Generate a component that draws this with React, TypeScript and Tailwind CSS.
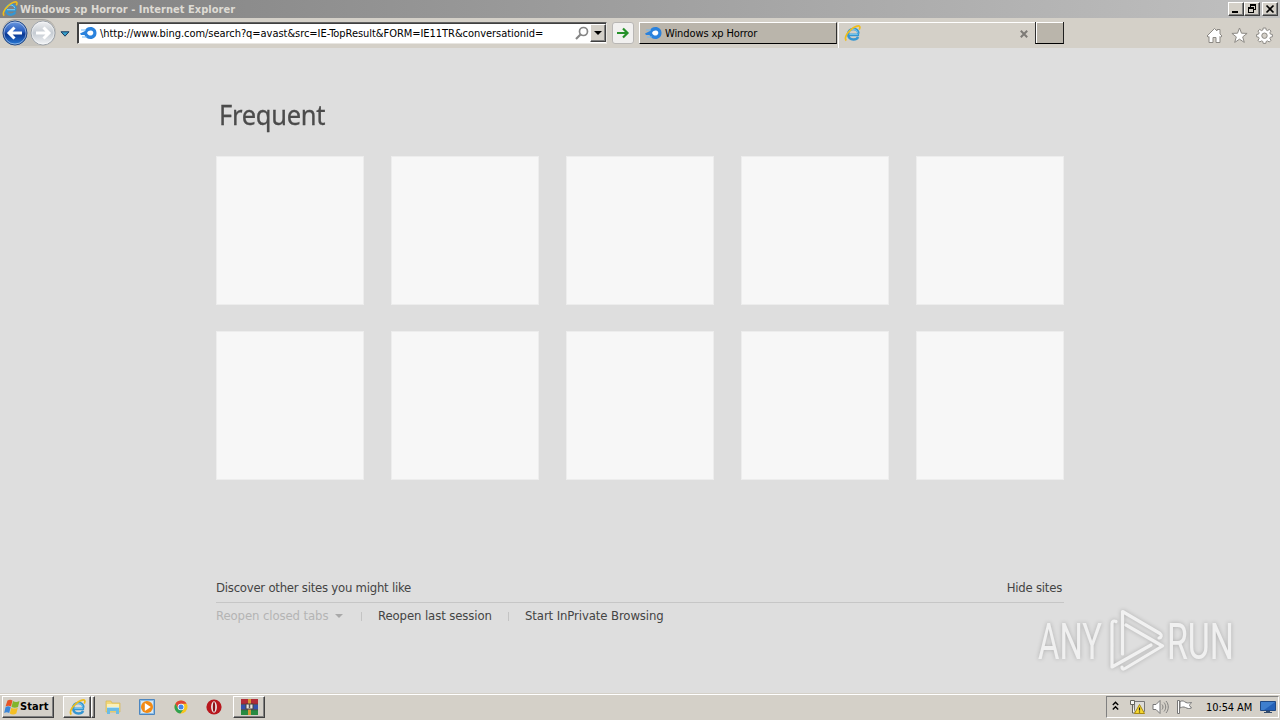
import { ReactNode } from "react";

const tiles = Array.from({ length: 10 }, (_, i) => i);

const raised = "border border-t-white border-l-white border-r-[#404040] border-b-[#404040] shadow-[inset_-1px_-1px_0_#808080]";

function IeIcon({ className }: { className?: string }) {
  return (
    <svg viewBox="0 0 16 16" className={className} fill="none">
      <path d="M14.2 9.300H5M13.600 8.200C13.400 5.500 11.500 3.700 8.800 3.700S3.900 5.800 3.900 8.800s2.100 4.900 5 4.900c2.100 0 3.600-.9 4.400-2.400" stroke="#3596d2" strokeWidth="2.400" />
      <path d="M12.8 7.200C12 5 10.600 4 8.700 4S5 5.200 4.400 7.500M5 8.700h8" stroke="#8bd4f6" strokeWidth=".9" />
      <path d="M2.200 14.600C.2 13 2 8.500 6 4.800S14 .2 14.800 1.500c.4.700.1 1.700-.5 2.800" stroke="#eebd1c" strokeWidth="1.600" />
    </svg>
  );
}

function BlueSwirl({ className }: { className?: string }) {
  return (
    <svg viewBox="0 0 17 14" className={className}>
      <path d="M0 7.500 5 5C5.500 2.500 7.500 1 10.500 1c3.500 0 6 2.500 6 6s-2.500 6-6 6c-3 0-5-1.500-6-4H1z" fill="#2a82dd" />
      <path d="M1 4h5M2 11h5" stroke="#71b8f2" strokeWidth="1" />
      <path d="M7 7c1-2 2.500-2.600 4-2.400 1.500.2 2.300 1.200 2.300 2.400s-.9 2.300-2.300 2.500C9.500 9.700 8 9 7 7z" fill="#fff" />
    </svg>
  );
}

function NavCircle({ forward }: { forward?: boolean }) {
  return (
    <svg viewBox="0 0 26 26" className="h-[26px] w-[26px]">
      <defs>
        <linearGradient id="back" x1="0" y1="0" x2="0" y2="1">
          <stop offset="0" stopColor="#6f9be0" />
          <stop offset=".42" stopColor="#2a5fc0" />
          <stop offset=".55" stopColor="#0a3793" />
          <stop offset="1" stopColor="#2a7dd8" />
        </linearGradient>
        <linearGradient id="fwd" x1="0" y1="0" x2="0" y2="1">
          <stop offset="0" stopColor="#f1f2f4" />
          <stop offset=".5" stopColor="#c5cbd2" />
          <stop offset="1" stopColor="#f4f6f8" />
        </linearGradient>
      </defs>
      <circle cx="13" cy="13" r="12" fill={forward ? "url(#fwd)" : "url(#back)"} stroke={forward ? "#9da3aa" : "#254a86"} />
      <circle cx="13" cy="13" r="11" fill="none" stroke="#fff" strokeOpacity=".45" />
      <path
        d={forward ? "M6 13h12M13.500 7.500 19 13l-5.500 5.500" : "M20 13H8M12.500 7.500 7 13l5.500 5.500"}
        fill="none"
        stroke="#fff"
        strokeWidth="3"
      />
    </svg>
  );
}

function CaptionButton({ children }: { children: ReactNode }) {
  return <div className={`flex h-[14px] w-4 items-center justify-center bg-[#d4d0c8] ${raised}`}>{children}</div>;
}

function TitleBar() {
  return (
    <div className="flex h-[18px] items-center bg-linear-to-r from-[#808080] to-[#c0c0c0] pr-[2px] pl-[2px]">
      <IeIcon className="h-4 w-4" />
      <span className="ml-[2px] grow pt-px text-[11px] leading-[17px] font-bold tracking-[0.03px] text-[#dedbd4]">Windows xp Horror - Internet Explorer</span>
      <CaptionButton>
        <svg viewBox="0 0 12 10" className="h-[10px] w-3"><path d="M2 7h6v2H2z" /></svg>
      </CaptionButton>
      <CaptionButton>
        <svg viewBox="0 0 12 10" className="h-[10px] w-3 shrink-0">
          <path d="M4 0h6v6H8V5h1V2H5v1H4zM2 3h6v6H2zM3 5v3h4V5z" fillRule="evenodd" />
        </svg>
      </CaptionButton>
      <div className="w-[2px]" />
      <CaptionButton>
        <svg viewBox="0 0 12 10" className="h-[10px] w-3"><path d="m2.500 1.500 7 7M9.500 1.500l-7 7" stroke="#000" strokeWidth="1.700" /></svg>
      </CaptionButton>
    </div>
  );
}

function AddressBar() {
  return (
    <div className="ml-[5px] flex h-[22px] w-[530px] items-center border border-t-[#606060] border-r-[#e8e6e2] border-b-[#e8e6e2] border-l-[#404040] bg-white shadow-[inset_1px_1px_0_#404040]">
      <BlueSwirl className="ml-[2px] h-[14px] w-[17px]" />
      <span className="ml-[3px] grow pt-[2px] text-[11px] leading-[16px] tracking-[-0.045px] whitespace-nowrap text-black">
        \http://www.bing.com/search?q=avast&amp;src=IE-TopResult&amp;FORM=IE11TR&amp;conversationid=
      </span>
      <svg viewBox="0 0 14 14" className="mr-[1px] h-[14px] w-[14px] shrink-0" fill="none" stroke="#858585">
        <circle cx="8.500" cy="5.500" r="4" strokeWidth="1.700" />
        <path d="M5.500 8.500 1 13" strokeWidth="2.200" />
      </svg>
      <div className={`flex h-[18px] w-4 shrink-0 items-center justify-center bg-[#d4d0c8] ${raised}`}>
        <svg viewBox="0 0 8 4" className="h-1 w-2"><path d="M0 0h8L4 4z" /></svg>
      </div>
    </div>
  );
}

function Toolbar() {
  return (
    <div className="flex h-[30px] items-start bg-[#d4d0c8] pt-[4px]">
      <div className="-mt-[3px] ml-[2px] flex h-[27px] gap-[2px] rounded-full border-t border-[#a9a6a0] bg-[#c6c3bc]">
        <NavCircle />
        <NavCircle forward />
      </div>
      <svg viewBox="0 0 10 6" className="mt-[9px] ml-[4px] h-[6px] w-[10px]">
        <path d="M1 .8h8L5 5.200z" fill="#35a0cc" stroke="#183a60" />
      </svg>
      <div className="ml-[2px]"><AddressBar /></div>
      <div className="ml-[5px] flex h-[22px] w-[22px] items-center justify-center rounded-[3px] border border-[#b9b7b5] bg-[#f1f0ef]">
        <svg viewBox="0 0 14 12" className="h-3 w-[14px]" fill="none" stroke="#26912a" strokeWidth="2.200">
          <path d="M1 6h10M7 1.500 11.500 6 7 10.500" />
        </svg>
      </div>
      <div className="ml-[5px] flex h-[22px] w-[198px] items-center border border-t-white border-r-[#303030] border-b-black border-l-white bg-[#bab5ab]">
        <BlueSwirl className="ml-[5px] h-[14px] w-[17px]" />
        <span className="ml-[3px] pt-[2px] text-[11px] leading-[16px] tracking-[-0.1px] text-black">Windows xp Horror</span>
      </div>
      <div className="ml-[1px] flex h-[26px] w-[197px] items-center border-t border-l border-white pb-1">
        <IeIcon className="ml-[5px] h-[17px] w-[17px]" />
        <svg viewBox="0 0 8 8" className="mr-[7px] ml-auto h-2 w-2"><path d="m.8.800 6.400 6.400M7.200.8.800 7.200" stroke="#7d7a76" strokeWidth="2" /></svg>
      </div>
      <div className="flex h-[22px] w-[29px] border-r border-b border-l border-r-[#202020] border-b-black border-l-[#303030] bg-[#bab5ab]">
        <div className="grow border-t border-l border-white" />
      </div>
      <div className="mt-[5px] mr-[7px] ml-auto flex gap-[8px]">
        <svg viewBox="0 0 17 17" className="h-[17px] w-[17px]">
          <path d="M1 9 8.500 1.500 11 4V2.500h3V7l2 2-1.300 1.200-.7-.7v6H10v-5H7v5H3v-6l-.8.700z" fill="#fff" stroke="#8c8984" />
        </svg>
        <svg viewBox="0 0 17 17" className="h-[17px] w-[17px]">
          <path d="m8.500 1 2 5.200 5.600.2-4.400 3.500 1.600 5.500-4.800-3.200-4.800 3.200 1.600-5.500L.9 6.400l5.600-.2z" fill="#fff" stroke="#8c8984" />
        </svg>
        <svg viewBox="0 0 17 17" className="h-[17px] w-[17px]">
          <path d="M7.200 1h2.600l.4 2 1.300.6L13.300 2.400 15 4.100l-1.100 1.700.5 1.300 2 .4v2.300l-2 .4-.5 1.300 1.100 1.800-1.700 1.700-1.800-1.100-1.300.5-.4 2H7.200l-.4-2-1.300-.5L3.700 15 2 13.300l1.100-1.800-.5-1.300-2-.4V7.500l2-.4.5-1.300L2 4.100l1.700-1.700 1.800 1.200L6.800 3z" fill="#fff" stroke="#8c8984" />
          <circle cx="8.500" cy="8.700" r="2.700" fill="#d4d0c8" stroke="#8c8984" />
        </svg>
      </div>
    </div>
  );
}

function Watermark() {
  return (
    <svg viewBox="0 0 214 76" className="absolute top-[603px] left-[1034px] h-[76px] w-[214px] overflow-visible [filter:drop-shadow(0_0_2px_rgba(0,0,0,0.22))]">
      <g fill="#f0f0f0" fontFamily="Roboto, sans-serif" fontWeight="400" fontSize="50">
        <text x="4" y="56" textLength="64" lengthAdjust="spacingAndGlyphs">ANY</text>
        <text x="133" y="56" textLength="67" lengthAdjust="spacingAndGlyphs">RUN</text>
      </g>
      <g fill="none" stroke="#f1f1f1" strokeWidth="3.200" strokeLinejoin="round" strokeLinecap="round">
        <path d="M82 18.500c-2-1-4-.5-4 2V64l39-22" />
        <path d="M88.500 51V8.500L126 30.500c2 1.500 1.500 4-1 4.500" />
        <path d="M92 22l36.500 21L91 65.500c-2 1.200-3 .5-3-1.500" />
      </g>
    </svg>
  );
}

function NewTabPage() {
  return (
    <main className="h-[645px] bg-[#dedede] pl-[216px]">
      <h1 className="ml-[3px] origin-left scale-x-[0.945] pt-[49px] font-['Noto_Sans',sans-serif] text-[27px] leading-[36px] tracking-[-0.3px] text-[#4b4b4b] [-webkit-text-stroke:0.3px_#4b4b4b]">Frequent</h1>
      <div className="mt-[23px] grid w-[848px] grid-cols-5 gap-x-[26.5px] gap-y-[26px]">
        {tiles.map((i) => (
          <div key={i} className="h-[149px] border border-[#ededed] bg-[#f7f7f7]" />
        ))}
      </div>
      <div className="mt-[98px] w-[848px] text-[13px] text-[#444]">
        <div className="flex h-[25px] justify-between border-b border-[#c6c6c6] pr-[2px] leading-[20px] tracking-[-0.24px]">
          <span>Discover other sites you might like</span>
          <span>Hide sites</span>
        </div>
        <div className="flex h-[26px] items-center tracking-[-0.1px]">
          <span className="w-[111px] whitespace-nowrap text-[#b4b4b4]">Reopen closed tabs</span>
          <svg viewBox="0 0 8 4" className="ml-[8px] h-1 w-2"><path d="M0 0h8L4 4z" fill="#a9a9a9" /></svg>
          <span className="ml-[18px] h-[9px] w-px bg-[#c4c4c4]" />
          <span className="ml-[16px] w-[114px] whitespace-nowrap">Reopen last session</span>
          <span className="ml-[16px] h-[9px] w-px bg-[#c4c4c4]" />
          <span className="ml-[16px] whitespace-nowrap">Start InPrivate Browsing</span>
        </div>
      </div>
    </main>
  );
}

function Taskbar() {
  return (
    <footer className="flex h-[27px] items-center border-t border-[#d4d0c8] bg-[#d4d0c8] shadow-[inset_0_1px_0_#fff]">
      <div className={`ml-[2px] flex h-[22px] w-[52px] items-center ${raised}`}>
        <svg viewBox="0 0 16 16" className="ml-px h-4 w-4 shrink-0">
          <path d="M3.500 1.500c2-1.300 3.500-1 5 0L7 7.500c-1.700-1-3.500-1-5.500 0z" fill="#e75425" />
          <path d="M9 2c2 1.200 4 1.200 6.500 0L14 8c-2 1-4.300 1-6.500 0z" fill="#82b52c" />
          <path d="M1.500 8.200c2-1.200 3.500-1 5.200 0l-1.500 5.800c-1.700-1-3.200-1-5 0z" fill="#3b86d8" />
          <path d="M7.300 8.700c2 1.200 4.200 1.200 6.500 0l-1.500 5.800c-2 1.200-4.500 1.200-6.500 0z" fill="#f5bf23" />
        </svg>
        <span className="text-[11px] leading-[16px] font-bold tracking-[0.1px] text-black">Start</span>
      </div>
      <div className="ml-[9px] flex h-[22px]">
        <div className={`flex w-[28px] items-center justify-center bg-[#dfdcd5] ${raised}`}>
          <IeIcon className="h-[17px] w-[17px]" />
        </div>
        <div className={`w-[4px] ${raised}`} />
      </div>
      <svg viewBox="0 0 16 16" className="ml-[10px] h-4 w-4">
        <path d="M1 2h5l1 2h8v9H1z" fill="#f2d779" stroke="#d6b855" strokeWidth=".7" />
        <path d="M2 5h12v4H2z" fill="#faf0b9" />
        <path d="M2 9h12v6h-3v-3H5v3H2z" fill="#6bbce5" />
        <path d="M2 8.500h12" stroke="#b7e4f6" />
      </svg>
      <svg viewBox="0 0 16 16" className="ml-[18px] h-4 w-4">
        <path d="M.5.500h15v15H.5z" fill="#8dbde5" stroke="#4c86c0" />
        <path d="M2 2h12v12H2z" fill="#d7e8f5" />
        <circle cx="8" cy="8" r="6" fill="#f28a14" />
        <path d="M5.800 4v8l6-4z" fill="#fff" />
      </svg>
      <svg viewBox="0 0 16 16" className="ml-[18px] h-4 w-4">
        <circle cx="8" cy="8" r="6.500" fill="#f7c51e" />
        <path d="M2.400 4.700A6.500 6.500 0 0 1 13.600 4.700H8L5.200 9.700z" fill="#df4436" />
        <path d="M2.400 4.700A6.500 6.500 0 0 0 7.400 14.500L10.800 9.700H5.200z" fill="#2fa152" />
        <circle cx="8" cy="8" r="3.300" fill="#fff" />
        <circle cx="8" cy="8" r="2.500" fill="#4285e8" />
      </svg>
      <svg viewBox="0 0 16 16" className="ml-[17px] h-4 w-4">
        <circle cx="8" cy="8" r="7.600" fill="#b8171d" />
        <ellipse cx="8" cy="8" rx="2.900" ry="5.700" fill="#ececec" />
        <ellipse cx="8" cy="8" rx="1.200" ry="4.900" fill="#8d1217" />
      </svg>
      <div className={`ml-[11px] flex h-[22px] w-[32px] items-center justify-center ${raised}`}>
        <svg viewBox="0 0 17 16" className="h-4 w-[17px]">
          <path d="M0 0h17v5H0z" fill="#b22b38" />
          <path d="M0 5.500h17v5H0z" fill="#3452ad" />
          <path d="M0 11h17v5H0z" fill="#278b42" />
          <path d="M0 5.300h17M0 10.700h17" stroke="#302c36" strokeWidth=".8" />
          <path d="M7 0h3v16H7z" fill="#d59b35" />
          <path d="M5 5h7v5H5z" fill="#e7e5df" stroke="#4b403e" />
          <path d="M8.500 5v4" stroke="#555" strokeWidth="1.500" />
        </svg>
      </div>
      <div className="mr-[1px] ml-auto flex h-[22px] w-[173px] items-center border border-t-[#808080] border-r-white border-b-white border-l-[#808080]">
        <svg viewBox="0 0 7 10" className="mb-[2px] ml-[5px] h-[10px] w-[7px]" fill="none" stroke="#000" strokeWidth="1.400">
          <path d="m.8 4 2.700-2.700L6.200 4M.8 8.500l2.700-2.700 2.700 2.700" />
        </svg>
        <svg viewBox="0 0 17 16" className="ml-[10px] h-4 w-[17px]">
          <path d="M5.500 2.500h10v10h-10z" fill="#dddcd8" stroke="#777" />
          <path d="M1.500 1.500h4v4h-4zM3.500 5.500V14H6" fill="#f7f7f3" stroke="#65645d" />
          <path d="m10.500 5.500 5 9h-10z" fill="#f6d830" stroke="#a88a11" />
          <path d="M10.500 8.500v3M10.500 12.500v1" stroke="#222" strokeWidth="1.200" />
        </svg>
        <svg viewBox="0 0 17 16" className="ml-[6px] h-4 w-[17px]" fill="none" stroke="#777">
          <path d="M1 5.500h3l4-4v13l-4-4H1z" fill="#fff" />
          <path d="M10 5.500c1.300 1.500 1.300 3.500 0 5M12 3.500c2.300 2.700 2.300 6.300 0 9M14 2c3 3.500 3 8.500 0 12" strokeWidth=".9" />
        </svg>
        <svg viewBox="0 0 17 16" className="ml-[7px] h-4 w-[17px]">
          <path d="M4 2.500c3-1.500 4 0 6 1s3.500.2 5.500 0c-1 1.500-2 2-2 3l2 2.500c-2.500 1-4 .5-6-.5S6 8 4 9z" fill="#fff" stroke="#777" />
          <path d="M1.500 1.500h2v13h-2z" fill="#fff" stroke="#777" />
        </svg>
        <span className="ml-[13px] w-[46px] pt-px text-[11px] leading-[16px] tracking-[-0.1px] whitespace-nowrap text-black">10:54 AM</span>
        <svg viewBox="0 0 16 14" className="ml-[8px] h-[14px] w-4">
          <path d="M.5 1.500h15v9H.5z" fill="#2461b8" stroke="#204984" />
          <path d="M1 2h14L4 10H1z" fill="#3f7fce" />
          <path d="M6 11h4v1h2v1H4v-1h2z" fill="#344c6c" />
        </svg>
      </div>
    </footer>
  );
}

export default function App() {
  return (
    <div className="relative h-[720px] w-[1280px] overflow-hidden bg-[#dedede] font-['DejaVu_Sans_Condensed','DejaVu_Sans',sans-serif]">
      <TitleBar />
      <Toolbar />
      <NewTabPage />
      <Taskbar />
      <Watermark />
    </div>
  );
}
